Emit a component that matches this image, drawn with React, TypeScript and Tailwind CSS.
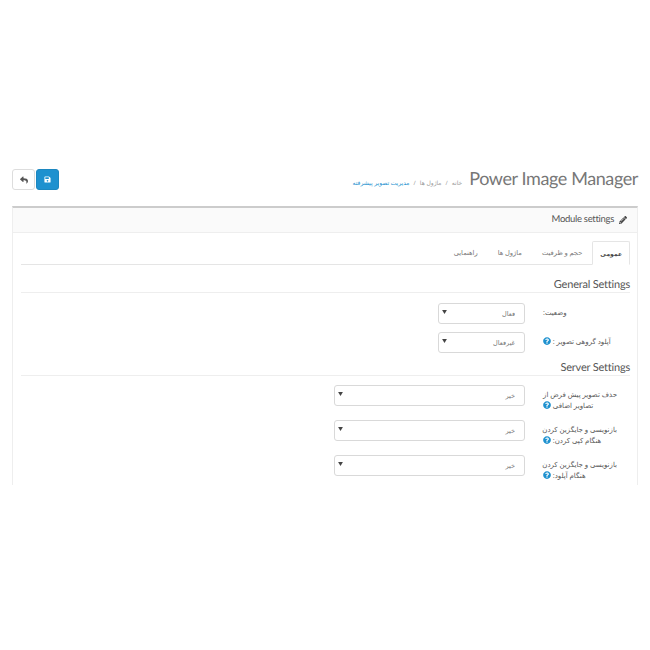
import { FaPencilAlt, FaQuestionCircle, FaReply, FaSave } from 'react-icons/fa';

const tabs = ['عمومی', 'حجم و ظرفیت', 'ماژول ها', 'راهنمایی'];

function Help() {
  return <FaQuestionCircle className="inline-block w-2 h-2 text-[#1e91cf] align-[-1px]" />;
}

function SectionTitle({ title, className }: { title: string; className: string }) {
  return (
    <h3 className={`h-[17px] border-b border-[#eeeeee] pt-[2px] text-[11px] leading-[14px] tracking-[-0.2px] text-[#555555] text-right font-['Lato',sans-serif] ${className}`}>
      <span dir="ltr">{title}</span>
    </h3>
  );
}

interface RowProps {
  lines: string[];
  value: string;
  wide?: boolean;
  help?: boolean;
  className?: string;
}

function SettingRow({ lines, value, wide, help, className }: RowProps) {
  return (
    <div className={`flex items-start h-[21px] ${className ?? ''}`}>
      <label className="w-[87px] pr-[13px] pt-[5px] text-left text-[7px] leading-[11px] text-[#555555] shrink-0">
        {lines.map((line, i) => (
          <span key={line} className="block whitespace-nowrap">
            {line}
            {help && i === lines.length - 1 ? <> <Help /></> : null}
          </span>
        ))}
      </label>
      <div className={`relative mr-[18px] ${wide ? 'w-[191px]' : 'w-[87px]'}`}>
        <select
          defaultValue={value}
          className="block w-full h-[21px] appearance-none border border-[#d9d9d9] rounded-[3px] bg-white pr-[9px] text-[6.5px] text-[#777777]"
        >
          <option>{value}</option>
        </select>
        <svg viewBox="0 0 6 5" className="absolute left-[4px] top-[7px] w-[5px] h-1 text-[#444444] pointer-events-none">
          <path d="M0 0h6L3 5z" fill="currentColor" />
        </svg>
      </div>
    </div>
  );
}

export default function App() {
  return (
    <div dir="rtl" className="h-[650px] bg-white px-3 pt-[169px] [text-rendering:geometricPrecision] font-['Noto_Sans','DejaVu_Sans',sans-serif]">
      {/* Page header */}
      <div className="flex items-start h-[37px]">
        <h1 dir="ltr" className="text-[18px] leading-[18px] tracking-[-0.4px] text-[#777777] font-['Lato',sans-serif] whitespace-nowrap">
          Power Image Manager
        </h1>
        <div className="flex items-center gap-[4px] mr-[7px] mt-[9px] text-[6px] leading-[10px] text-[#999999]">
          <span>خانه</span>
          <span>/</span>
          <span>ماژول ها</span>
          <span>/</span>
          <span className="text-[#1e91cf]">مدیریت تصویر پیشرفته</span>
        </div>
        <div dir="ltr" className="mr-auto flex gap-px">
          <button className="w-[23px] h-[21px] flex items-center justify-center border border-[#dddddd] rounded-[3px] bg-white text-[#555555]">
            <FaReply className="w-2 h-2" />
          </button>
          <button className="w-[23px] h-[21px] flex items-center justify-center border border-[#1c87c0] rounded-[3px] bg-[#1e91cf] text-white">
            <FaSave className="w-[7px] h-[7px]" />
          </button>
        </div>
      </div>

      {/* Panel */}
      <div className="h-[279px] overflow-hidden border-x border-[#eeeeee] border-t-[2px] border-t-[#cccccc]">
        <div className="h-[25px] flex items-center gap-[5px] pr-[10px] bg-[#fafafa] border-b border-[#eeeeee] text-[#555555] font-['Lato',sans-serif]">
          <FaPencilAlt className="w-2 h-2 text-[#444444]" />
          <span dir="ltr" className="text-[9.5px] tracking-[-0.3px]">Module settings</span>
        </div>
        <div className="pl-2 pr-[7px] pt-2">
          <div className="flex h-6 border-b border-[#e5e5e5]">
            {tabs.map((tab, i) => (
              <div
                key={tab}
                className={`pt-[7px] leading-[10px] whitespace-nowrap ${
                  i === 0
                    ? 'h-6 px-[7px] bg-white border border-[#e5e5e5] border-b-white rounded-t-[2px] text-[6px] font-bold text-[#444444]'
                    : 'px-[10px] text-[6.7px] text-[#777777]'
                }`}
              >
                {tab}
              </div>
            ))}
          </div>

          <SectionTitle title="General Settings" className="mt-[11px] mb-[10px]" />
          <SettingRow lines={['وضعیت:']} value="فعال" className="mb-2" />
          <SettingRow lines={['آپلود گروهی تصویر :']} value="غیرفعال" help />

          <SectionTitle title="Server Settings" className="mt-[6px] mb-[9px]" />
          <SettingRow lines={['حذف تصویر پیش فرض از', 'تصاویر اضافی']} value="خیر" wide help className="mb-[14px]" />
          <SettingRow lines={['بازنویسی و جایگزین کردن', 'هنگام کپی کردن:']} value="خیر" wide help className="mb-[14px]" />
          <SettingRow lines={['بازنویسی و جایگزین کردن', 'هنگام آپلود:']} value="خیر" wide help />
        </div>
      </div>
    </div>
  );
}
